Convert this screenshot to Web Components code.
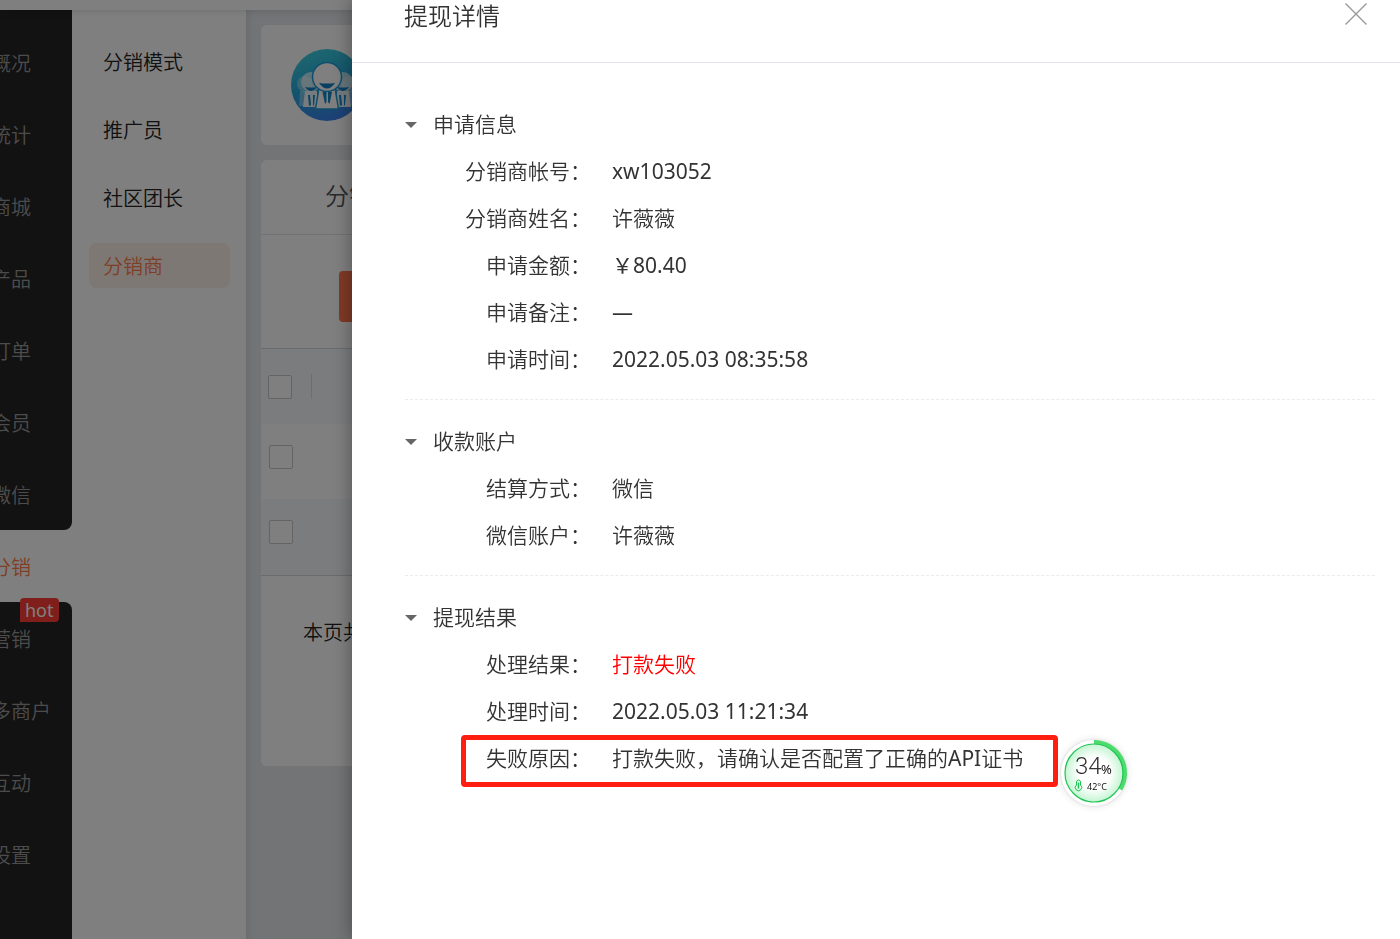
<!DOCTYPE html>
<html lang="zh-CN">
<head>
<meta charset="utf-8">
<title>提现详情</title>
<style>
html, body { margin: 0; }
body {
  font-family: "Noto Sans", "Noto Sans CJK SC", sans-serif;
  font-size: 20px;
  color: #333;
  background: #fff;
}
.latin { font-weight: 400; }
</style>
</head>
<body>
<app-shell>
  <main-nav slot="nav">
    <nav-group>
      <nav-item>概况</nav-item>
      <nav-item>统计</nav-item>
      <nav-item>商城</nav-item>
      <nav-item>产品</nav-item>
      <nav-item>订单</nav-item>
      <nav-item>会员</nav-item>
      <nav-item>微信</nav-item>
    </nav-group>
    <nav-item active>分销</nav-item>
    <nav-group last>
      <nav-item badge="hot">营销</nav-item>
      <nav-item>多商户</nav-item>
      <nav-item>互动</nav-item>
      <nav-item>设置</nav-item>
    </nav-group>
  </main-nav>
  <sub-nav slot="subnav">
    <sub-item>分销模式</sub-item>
    <sub-item>推广员</sub-item>
    <sub-item>社区团长</sub-item>
    <sub-item active>分销商</sub-item>
  </sub-nav>
  <panel-card><team-icon></team-icon></panel-card>
  <panel-card><reseller-list></reseller-list></panel-card>
</app-shell>
<side-drawer heading="提现详情">
  <detail-section heading="申请信息">
    <detail-row label="分销商帐号" numeric>xw103052</detail-row>
    <detail-row label="分销商姓名">许薇薇</detail-row>
    <detail-row label="申请金额" numeric>￥80.40</detail-row>
    <detail-row label="申请备注" numeric>—</detail-row>
    <detail-row label="申请时间" numeric>2022.05.03 08:35:58</detail-row>
  </detail-section>
  <detail-section heading="收款账户">
    <detail-row label="结算方式">微信</detail-row>
    <detail-row label="微信账户">许薇薇</detail-row>
  </detail-section>
  <detail-section heading="提现结果">
    <detail-row label="处理结果" danger>打款失败</detail-row>
    <detail-row label="处理时间" numeric>2022.05.03 11:21:34</detail-row>
    <detail-row label="失败原因" marked>打款失败，请确认是否配置了正确的<span class="latin">API</span>证书<usage-gauge slot="extra"></usage-gauge></detail-row>
  </detail-section>
</side-drawer>

<script>
function define(name, html, setup) {
  customElements.define(name, class extends HTMLElement {
    constructor() {
      super();
      this.attachShadow({ mode: 'open' });
    }
    connectedCallback() {
      const t = document.createElement('template');
      t.innerHTML = html;
      this.shadowRoot.replaceChildren(t.content.cloneNode(true));
      if (setup) setup(this, this.shadowRoot);
    }
  });
}

define('app-shell', `
<style>
:host { display: flex; flex-direction: column; min-height: 100vh; overflow: hidden; position: relative; }
:host::after { content: ""; position: absolute; inset: 0; background: rgba(0,0,0,.5); z-index: 5; }
header { height: 10px; background: #fff; box-shadow: 0 0 8px rgba(0,0,0,.16); position: relative; z-index: 1; }
.body { flex: 1; display: flex; }
main { flex: 1; display: flex; flex-direction: column; gap: 15px; padding: 15px; background: #e6e8ed;
  box-shadow: inset 8px 0 8px -6px rgba(0,0,0,.08); }
</style>
<header></header>
<div class="body">
  <slot name="nav"></slot>
  <slot name="subnav"></slot>
  <main><slot></slot></main>
</div>`);

define('main-nav', `
<style>
:host { display: block; width: 120px; margin-left: -48px; flex: none; background: #fff; }
nav { display: flex; flex-direction: column; min-height: 100%; }
</style>
<nav><slot></slot></nav>`);

define('nav-group', `
<style>
:host { display: block; background: #242424; border-radius: 0 0 8px 0; padding-top: 16px; }
:host([last]) { border-radius: 0 8px 0 0; flex: 1; padding-top: 0; }
</style>
<slot></slot>`);

define('nav-item', `
<style>
:host { display: block; position: relative; color: #999; font-weight: 350; }
:host([active]) { color: #ff7d4b; }
a { display: block; padding: 4px 0 0 39px; line-height: 68px; color: inherit; text-decoration: none; white-space: nowrap; }
.badge { position: absolute; left: 68px; top: -4px; padding: 0 5px; line-height: 24px; font-size: 18px; font-weight: 400;
  color: #fff; background: #ff3c34; border-radius: 4px 4px 4px 0; }
</style>
<a href="#"><slot></slot></a>`, (host, root) => {
  if (host.hasAttribute('badge')) {
    const b = document.createElement('span');
    b.className = 'badge';
    b.textContent = host.getAttribute('badge');
    root.append(b);
  }
});

define('sub-nav', `
<style>
:host { display: block; width: 174px; flex: none; background: #fff; }
nav { display: flex; flex-direction: column; gap: 23px; padding: 29px 16px 0 17px; }
</style>
<nav><slot></slot></nav>`);

define('sub-item', `
<style>
:host { display: block; color: #222; font-weight: 350; }
a { display: block; padding: 3px 0 0 14px; line-height: 42px; border-radius: 8px; color: inherit; text-decoration: none; }
:host([active]) { color: #ff7d4b; }
:host([active]) a { background: #fcf0ea; }
</style>
<a href="#"><slot></slot></a>`);

define('panel-card', `
<style>:host { display: block; background: #fff; border-radius: 6px; overflow: hidden; }</style>
<slot></slot>`);

define('team-icon', `
<style>:host { display: block; padding: 24px 30px; } svg { display: block; }</style>
<svg width="72" height="72" viewBox="0 0 72 72" aria-hidden="true">
  <defs>
    <linearGradient id="g" x1="0.3" y1="0" x2="0.6" y2="1">
      <stop offset="0" stop-color="#3cd0e0"/><stop offset=".5" stop-color="#26a8dc"/><stop offset="1" stop-color="#3c80ee"/>
    </linearGradient>
  </defs>
  <circle cx="36" cy="36" r="36" fill="url(#g)"/>
  <g fill="#fff" fill-opacity=".35"><circle cx="14" cy="35" r="8"/><circle cx="58" cy="35" r="8"/><path d="M9 42h10v15H8zM53 42h10l1 15H53z"/></g>
  <g>
    <circle cx="20" cy="33" r="10" fill="#fff" fill-opacity=".65"/>
    <path d="M14 42h12v16H12z" fill="#fff" fill-opacity=".9"/>
    <path d="M14 38q6 1 12 0-6 8-12 0z" fill="#1580c4"/>
    <path d="M17 46h2l1 10-2 1zM22 46h2l-1 10-1 1z" fill="#1588c8"/>
    <circle cx="52" cy="33" r="10" fill="#fff" fill-opacity=".65"/>
    <path d="M46 42h12l2 16H46z" fill="#fff" fill-opacity=".9"/>
    <path d="M46 38q6 1 12 0-6 8-12 0z" fill="#1580c4"/>
    <path d="M48 46h2l1 10-2 1zM53 46h2l-1 10-1 1z" fill="#1588c8"/>
  </g>
  <path d="M28 39h16l3.500 21h-23z" fill="#fff" stroke="#1e9cd8" stroke-width="1.500"/>
  <circle cx="36" cy="28" r="14.500" fill="#fff" stroke="#1e9cd8" stroke-width="1.500"/>
  <path d="M28 34q8 1 16 0-8 11-16 0z" fill="#1080c4"/>
  <path d="M31.500 43h4v10l-1.500 2zM37 43h4l-2.500 12-1.500-2z" fill="#1588c8"/>
</svg>`);

define('reseller-list', `
<style>
:host { display: block; min-height: 606px; }
.tabs { height: 74px; border-bottom: 1px solid #e4e5e8; line-height: 72px; padding-left: 64px; font-size: 24px; font-weight: 350; color: #555; }
.tools { padding: 36px 78px 26px; border-bottom: 1px solid #d6d7da; }
button { display: block; width: 120px; height: 51px; border: 0; border-radius: 4px; background: #ff744c; }
table { width: 100%; border-collapse: separate; border-spacing: 0; border-bottom: 1px solid #d6d7da; }
th, td { height: 75px; padding: 0 0 0 7px; text-align: left; box-sizing: border-box; }
td { padding: 0 0 10px 8px; }
tr:last-child td { height: 76px; }
thead tr, tbody tr:last-child { background: #f7f8fb; }
.cell { display: flex; align-items: center; gap: 19px; }
.cell i { width: 1px; height: 25px; background: #dcdde0; }
input { appearance: none; margin: 0; width: 24px; height: 24px; box-sizing: border-box; border: 1px solid #c8c8c8; border-radius: 2px; background: #fff; }
.foot { padding: 41px 42px; line-height: 32px; font-weight: 350; color: #222; }
</style>
<div class="tabs">分销</div>
<div class="tools"><button type="button"></button></div>
<table>
  <thead><tr><th><div class="cell"><input type="checkbox"><i></i></div></th></tr></thead>
  <tbody>
    <tr><td><div class="cell"><input type="checkbox"></div></td></tr>
    <tr><td><div class="cell"><input type="checkbox"></div></td></tr>
  </tbody>
</table>
<div class="foot">本页共</div>`);

define('side-drawer', `
<style>
:host { display: block; position: fixed; inset: 0 0 0 352px; background: #fff; z-index: 10; overflow-y: auto;
  box-shadow: -2px 0 16px rgba(0,0,0,.3); }
header { display: flex; justify-content: space-between; align-items: flex-start; height: 62px; padding: 0 33px 0 52px; border-bottom: 1px solid #e2e3ea; }
h1 { margin: 0; font-size: 24px; line-height: 32px; font-weight: 350; }
button { display: block; margin: 0; padding: 3px 0 0; border: 0; background: none; }
svg { display: block; }
.body { padding: 20px 25px 0 53px; }
</style>
<header>
  <h1></h1>
  <button type="button" aria-label="关闭">
    <svg width="22" height="22" viewBox="0 0 22 22"><path d="M0.500 0.500l21 21M21.500 0.500l-21 21" stroke="#999" stroke-width="1.400" fill="none"/></svg>
  </button>
</header>
<div class="body"><slot></slot></div>`, (host, root) => {
  root.querySelector('h1').textContent = host.getAttribute('heading');
});

define('detail-section', `
<style>
:host { display: block; padding: 18px 0 16px; border-bottom: 1px dashed #ebebeb; font-size: 21px; font-weight: 350; }
:host(:last-child) { border-bottom: 0; }
summary { display: flex; align-items: center; gap: 16px; line-height: 47px; list-style: none; }
summary::before { content: ""; width: 0; border: 6px solid transparent; border-top: 6px solid #666; border-bottom: 0; }
</style>
<details open>
  <summary></summary>
  <slot></slot>
</details>`, (host, root) => {
  root.querySelector('summary').textContent = host.getAttribute('heading');
});

define('detail-row', `
<style>
:host { display: block; position: relative; }
dl { display: flex; gap: 21px; margin: 0; line-height: 47px; }
dt { width: 186px; flex: none; text-align: right; }
dd { margin: 0; flex: 1; }
:host([numeric]) dd { font-weight: 400; }
:host([danger]) dd { color: #f00; }
.mark { display: none; position: absolute; left: 56px; top: 0; width: 597px; height: 52px; box-sizing: border-box; border: 5px solid #ff1e10; border-radius: 4px; }
:host([marked]) .mark { display: block; }
</style>
<dl><dt></dt><dd><slot></slot></dd></dl>
<div class="mark"></div>
<slot name="extra"></slot>`, (host, root) => {
  root.querySelector('dt').textContent = host.getAttribute('label') + '：';
});

define('usage-gauge', `
<style>
:host { display: block; position: absolute; left: 649px; top: -2px; width: 80px; height: 80px; }
svg { display: block; }
text { font-family: Roboto, sans-serif; fill: #333; }
.small { font-family: "Noto Sans", sans-serif; fill: #111; }
</style>
<svg width="80" height="80" viewBox="0 0 80 80">
  <defs>
    <radialGradient id="r"><stop offset=".55" stop-color="#fff"/><stop offset="1" stop-color="#c4f5d2"/></radialGradient>
    <radialGradient id="s"><stop offset=".8" stop-color="#000" stop-opacity=".13"/><stop offset=".88" stop-color="#000" stop-opacity=".03"/><stop offset="1" stop-color="#000" stop-opacity="0"/></radialGradient>
  </defs>
  <circle cx="40" cy="40" r="40" fill="url(#s)"/>
  <circle cx="40" cy="40" r="33" fill="#fff"/>
  <path d="M40 9.500A30.500 30.500 0 0 1 65.900 56.200" fill="none" stroke="#4cdc6c" stroke-width="5"/>
  <circle cx="40" cy="40" r="29" fill="url(#r)" stroke="#1fc455" stroke-width="1.200"/>
  <text x="21" y="41" font-size="24" font-weight="300">34</text>
  <text class="small" x="47" y="41" font-size="13" font-weight="400">%</text>
  <text class="small" x="33" y="57" font-size="9" font-weight="400">42°C</text>
  <g fill="none" stroke="#1fc455" stroke-width="1">
    <path d="M22.500 52v-3a2 2 0 0 1 4 0v3a3.200 3.200 0 1 1-4 0z"/><path d="M24.500 49.500v6" stroke-width="1.500"/>
  </g>
</svg>`);
</script>
</body>
</html>
